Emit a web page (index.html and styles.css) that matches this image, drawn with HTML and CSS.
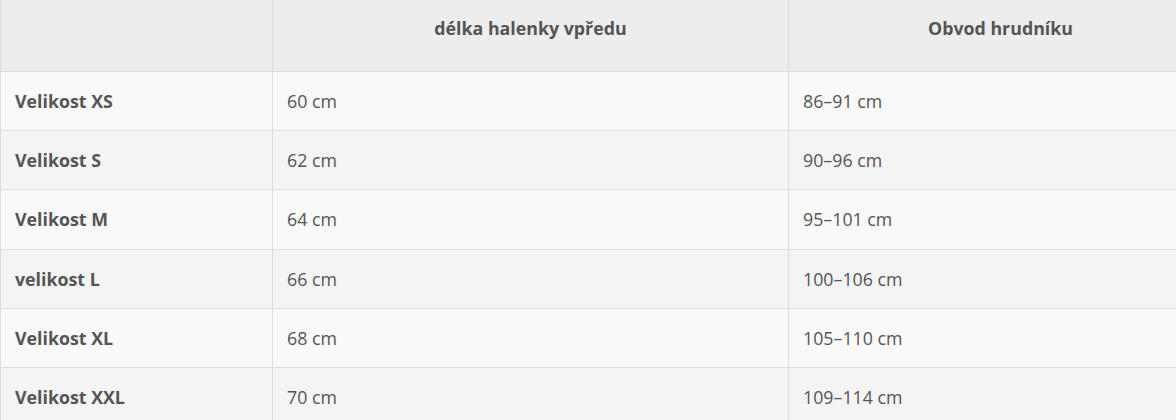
FILE: index.html
```html
<!DOCTYPE html>
<html lang="cs">
<head>
<meta charset="utf-8">
<link rel="stylesheet" href="styles.css">
</head>
<body>
<div class="wrap">
<table class="sizes">
  <thead>
    <tr><th class="c1"></th><th class="c2">délka halenky vpředu</th><th class="c3">Obvod hrudníku</th></tr>
  </thead>
  <tbody>
    <tr class="odd"><td class="label">Velikost XS</td><td>60 cm</td><td>86–91 cm</td></tr>
    <tr class="even"><td class="label">Velikost S</td><td>62 cm</td><td>90–96 cm</td></tr>
    <tr class="odd"><td class="label">Velikost M</td><td>64 cm</td><td>95–101 cm</td></tr>
    <tr class="even"><td class="label">velikost L</td><td>66 cm</td><td>100–106 cm</td></tr>
    <tr class="odd"><td class="label">Velikost XL</td><td>68 cm</td><td>105–110 cm</td></tr>
    <tr class="even"><td class="label">Velikost XXL</td><td>70 cm</td><td>109–114 cm</td></tr>
  </tbody>
</table>
</div>
</body>
</html>
```
FILE: styles.css
```css
html, body {
  margin: 0;
  padding: 0;
  background: #ffffff;
}
.wrap {
  width: 1213px;
}
.sizes {
  border-collapse: collapse;
  table-layout: fixed;
  width: 1213px;
  font-family: "Open Sans", "Liberation Sans", sans-serif;
  font-size: 17.8px;
  color: #555555;
}
.sizes th, .sizes td {
  border: 1px solid #dddddd;
  border-top: none;
  text-align: left;
  line-height: 24px;
}
.sizes th {
  background: #ededed;
  font-weight: 700;
  text-align: center;
  padding: 16px 15px 31px;
}
.sizes .c1 { width: 241px; }
.sizes .c2 { width: 485px; }
.sizes td {
  padding: 17px 14px 17.2px;
}
.sizes td.label {
  font-weight: 700;
}
.sizes tr.odd td { background: #f9f9f9; }
.sizes tr.even td { background: #f4f4f4; }
```
